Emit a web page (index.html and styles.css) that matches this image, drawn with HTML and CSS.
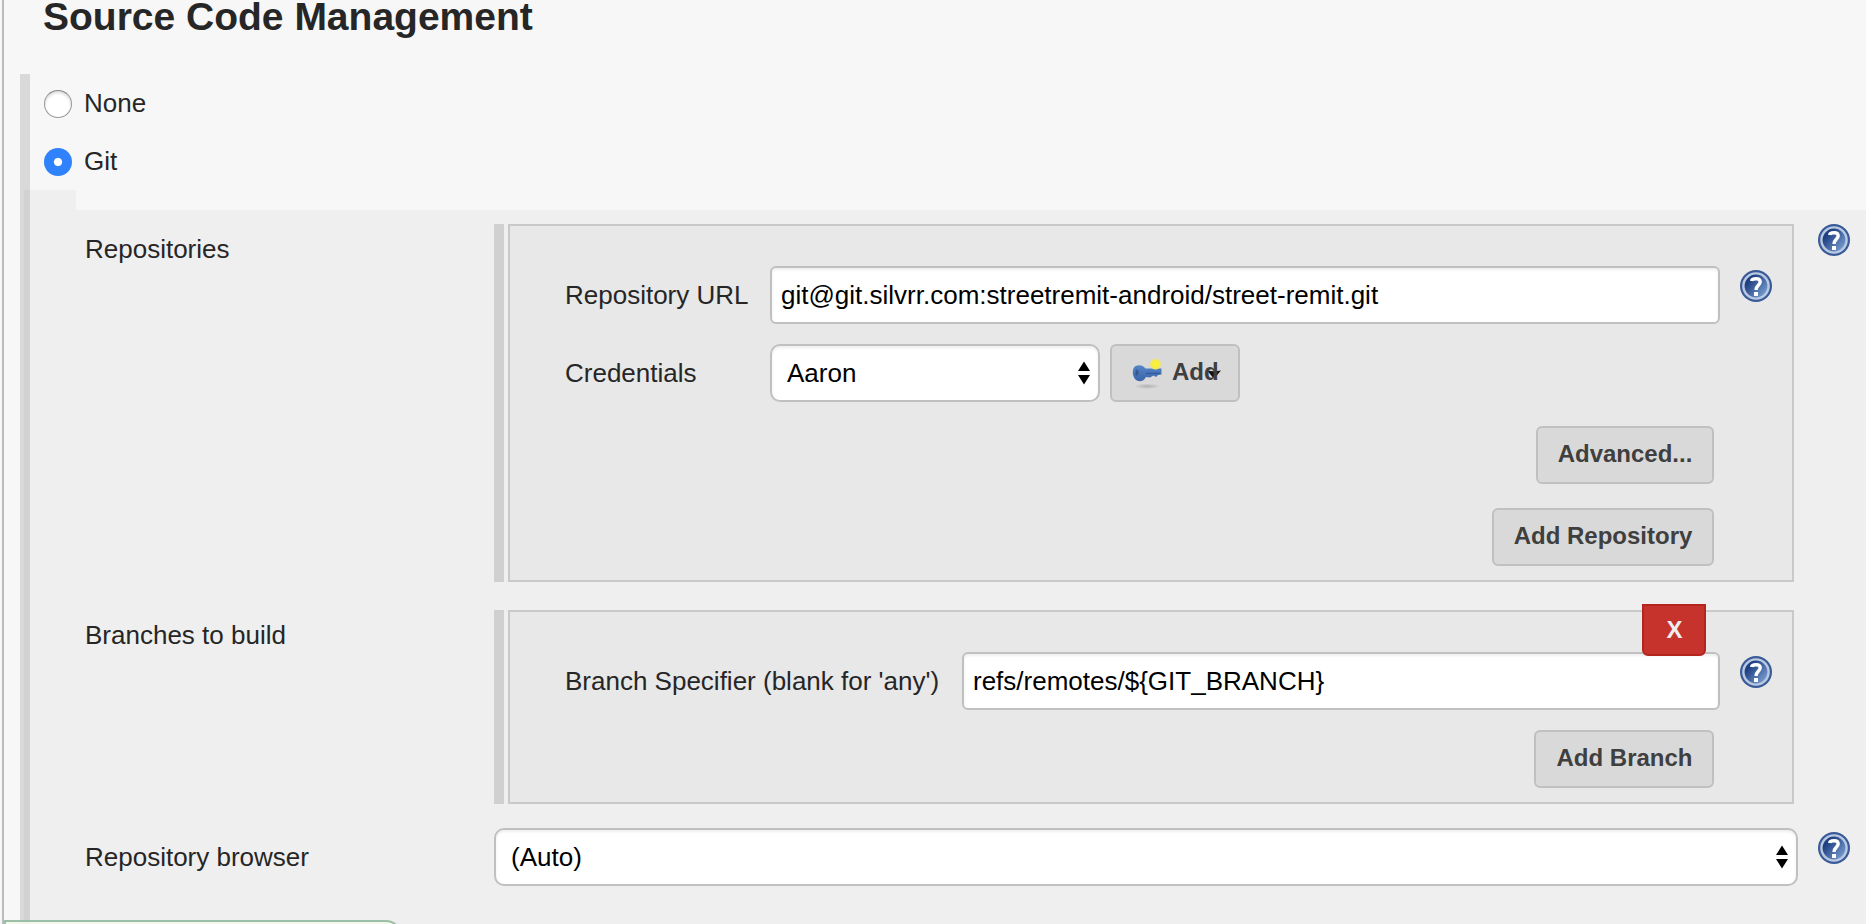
FILE: index.html
```html
<!DOCTYPE html>
<html lang="en">
<head>
<meta charset="utf-8">
<title>Source Code Management</title>
<link rel="stylesheet" href="styles.css">
</head>
<body>
<svg class="defs" width="0" height="0" aria-hidden="true">
  <defs>
    <linearGradient id="disc" x1="0.1" y1="0.2" x2="0.9" y2="0.9">
      <stop offset="0.15" stop-color="#1f3f82"/>
      <stop offset="1" stop-color="#7ea3d4"/>
    </linearGradient>
    <symbol id="help" viewBox="0 0 32 32">
      <circle cx="16" cy="16" r="16" fill="#3a5b97"/>
      <circle cx="16" cy="16" r="12.6" fill="url(#disc)" stroke="#b9c9e2" stroke-width="2.4"/>
      <path d="M11.6 11C12 8.2 20.2 7.6 20.2 11.8C20.2 15.2 16 15.4 16 20" fill="none" stroke="#fff" stroke-width="3.4"/>
      <rect x="14" y="22" width="4" height="4" fill="#fff"/>
    </symbol>
    <symbol id="updown" viewBox="0 0 12 24">
      <path d="M6 0.5L12 10H0ZM0 14H12L6 23.5Z" fill="#000"/>
    </symbol>
  </defs>
</svg>
<main class="page">
  <h1 class="heading">Source Code Management</h1>
  <section class="scm">
    <label class="choice"><span class="radio"></span><span class="choice-text">None</span></label>
    <label class="choice"><span class="radio radio-on"></span><span class="choice-text">Git</span></label>
    <div class="notch"></div>
    <div class="git">
      <div class="row row-repos">
        <div class="label">Repositories</div>
        <div class="handle"></div>
        <div class="panel">
          <div class="field">
            <span class="field-label url-label">Repository URL</span>
            <input class="input" type="text" value="git@git.silvrr.com:streetremit-android/street-remit.git">
            <svg class="help"><use href="#help"/></svg>
          </div>
          <div class="field credentials">
            <span class="field-label url-label">Credentials</span>
            <div class="select select-small"><span>Aaron</span><svg class="arrows"><use href="#updown"/></svg></div>
            <button class="button add">
              <svg class="key" viewBox="0 0 32 32">
                <defs>
                  <radialGradient id="glow"><stop offset="0.4" stop-color="#f8f03c"/><stop offset="0.75" stop-color="#f3ec50"/><stop offset="1" stop-color="#f3ec50" stop-opacity="0"/></radialGradient>
                  <radialGradient id="shade"><stop offset="0" stop-color="#b0b0b0"/><stop offset="1" stop-color="#b0b0b0" stop-opacity="0"/></radialGradient>
                  <linearGradient id="steel" x1="0" y1="0" x2="0" y2="1"><stop offset="0" stop-color="#5585c6"/><stop offset="1" stop-color="#3a64a8"/></linearGradient>
                </defs>
                <ellipse cx="15" cy="28.3" rx="13" ry="2.8" fill="url(#shade)"/>
                <path d="M2 9.5C4.5 6 11 6.5 13.5 10.5H29.5V16.5L26 17L24 19L21.5 17.5L18 19.5L14 19C12 23.5 6.5 24.5 3.5 21.5C0.5 18.5 0 12.5 2 9.5Z" fill="url(#steel)"/>
                <path d="M4 11.5Q7.5 12 6.5 15.5Q5.5 18.5 3.2 17Z" fill="#34588f"/>
                <path d="M14 15.3H28" stroke="#2f5797" stroke-width="1"/>
                <circle cx="23.5" cy="6.2" r="6" fill="url(#glow)"/>
              </svg>
              <svg class="caret" viewBox="0 0 14 8"><path d="M0 0.5Q7 2 14 0.5L8.5 7Q7 8 5.5 7Z" fill="#151515"/></svg>
              <span class="add-text">Add</span>
            </button>
          </div>
          <div class="actions advanced"><button class="button">Advanced...</button></div>
          <div class="actions add-repo"><button class="button">Add Repository</button></div>
        </div>
        <svg class="help"><use href="#help"/></svg>
      </div>
      <div class="row row-branches">
        <div class="label">Branches to build</div>
        <div class="handle"></div>
        <div class="panel">
          <button class="delete">X</button>
          <div class="field">
            <span class="field-label branch-label">Branch Specifier (blank for 'any')</span>
            <input class="input" type="text" value="refs/remotes/${GIT_BRANCH}">
            <svg class="help"><use href="#help"/></svg>
          </div>
          <div class="actions add-branch"><button class="button">Add Branch</button></div>
        </div>
      </div>
      <div class="row row-browser">
        <div class="label">Repository browser</div>
        <div class="select select-wide"><span>(Auto)</span><svg class="arrows"><use href="#updown"/></svg></div>
        <svg class="help"><use href="#help"/></svg>
      </div>
    </div>
  </section>
  <div class="status"></div>
</main>
</body>
</html>
```
FILE: styles.css
```css
* { box-sizing: border-box; }

body {
  margin: 0;
  background: #f7f7f7;
  color: #262626;
  font: 26px/30px "Liberation Sans", Arial, sans-serif;
  overflow: hidden;
}

.defs { position: absolute; }

.page {
  position: relative;
  height: 924px;
  margin-left: 2px;
  border-left: 2px solid #bbb;
  overflow: hidden;
}

.heading {
  margin: 0;
  padding-left: 39px;
  height: 74px;
  font-size: 39px;
  line-height: 33px;
  font-weight: bold;
  white-space: nowrap;
}

.scm {
  margin-left: 16px;
  border-left: 10px solid #d9d9d9;
  height: 850px;
}

.choice {
  display: flex;
  align-items: center;
  gap: 12px;
  height: 58px;
  padding: 2px 0 0 14px;
}

.choice-text { padding-bottom: 2px; }

.radio {
  width: 28px;
  height: 28px;
  border: 1px solid #999;
  border-top-color: #858585;
  border-radius: 50%;
  background: #fff;
  box-shadow: inset 0 2px 3px rgba(0, 0, 0, 0.15);
}

.radio-on {
  border: 0;
  background: radial-gradient(circle, #fff 3.6px, #2f82fb 4.6px);
  box-shadow: none;
}

.notch {
  width: 52px;
  height: 20px;
  margin-left: -6px;
  background: rgba(0, 0, 0, 0.033);
}

.git {
  height: 714px;
  margin-left: -6px;
  padding: 14px 0 0 61px;
  background: rgba(0, 0, 0, 0.033);
}

.row {
  display: flex;
  align-items: flex-start;
}

.row-repos { height: 386px; }
.row-branches { height: 218px; }

.label {
  width: 409px;
  padding-top: 10px;
}

.row-browser .label { padding-top: 14px; }

.handle {
  align-self: stretch;
  width: 10px;
  margin-right: 4px;
  background: #d0d0d0;
}

.row-repos .handle { height: 358px; }
.row-branches .handle { height: 194px; }

.panel {
  position: relative;
  width: 1286px;
  height: 358px;
  padding: 40px 20px 0 55px;
  border: 2px solid #c9c9c9;
  background: #e8e8e8;
}

.row-branches .panel { height: 194px; }

.help {
  flex: none;
  width: 32px;
  height: 32px;
}

.row > .help { margin-left: 24px; }
.row-browser > .help { margin: 4px 0 0 20px; }

.field {
  display: flex;
  align-items: flex-start;
}

.field-label {
  flex: none;
  line-height: 58px;
  white-space: nowrap;
}

.url-label { width: 205px; }
.branch-label { width: 397px; }

.input {
  flex: 1;
  min-width: 0;
  height: 58px;
  margin: 0 20px 0 0;
  padding: 0 9px;
  border: 2px solid #c0c0c0;
  border-radius: 6px;
  background: #fff;
  box-shadow: inset 0 2px 3px rgba(0, 0, 0, 0.07);
  color: #000;
  font: inherit;
}

.field .help { margin-top: 4px; }

.credentials { margin-top: 20px; }

.select {
  display: flex;
  align-items: center;
  justify-content: space-between;
  height: 58px;
  padding: 0 8px 0 15px;
  border: 2px solid #c0c0c0;
  border-radius: 10px;
  background: #fff;
  box-shadow: inset 0 2px 3px rgba(0, 0, 0, 0.07);
  color: #000;
}

.select-small { width: 330px; margin-right: 10px; }
.select-wide { width: 1304px; }

.arrows {
  width: 12px;
  height: 24px;
}

.button {
  height: 58px;
  margin: 0;
  padding: 0 16px 3px;
  border: 2px solid #c0c0c0;
  border-radius: 6px;
  background: #d9d9d9;
  color: #3f3f3f;
  font: bold 24px/30px "Liberation Sans", Arial, sans-serif;
  white-space: nowrap;
}

.add {
  position: relative;
  display: flex;
  align-items: center;
  width: 130px;
  padding: 0 0 3px 20px;
}

.add-text { position: relative; }

.key {
  width: 32px;
  height: 32px;
  margin: 4px 8px 0 0;
}

.caret {
  position: absolute;
  left: 95px;
  top: 24px;
  width: 14px;
  height: 8px;
}

.actions {
  display: flex;
  justify-content: flex-end;
  padding-right: 58px;
}

.advanced { margin-top: 24px; }
.advanced .button { width: 178px; padding: 0 0 3px; }
.add-repo { margin-top: 24px; }
.add-repo .button { width: 222px; padding: 0 0 3px; }
.add-branch { margin-top: 20px; }
.add-branch .button { width: 180px; padding: 0 0 3px 1px; }

.delete {
  position: absolute;
  right: 86px;
  top: -8px;
  width: 64px;
  height: 52px;
  padding: 0 0 1px 1px;
  border: 2px solid #b3251e;
  border-radius: 0 0 6px 6px;
  background: #c6322c;
  color: #eee;
  font: bold 24px/30px "Liberation Sans", Arial, sans-serif;
}

.status {
  position: absolute;
  left: 0;
  top: 920px;
  width: 398px;
  height: 40px;
  border: 2px solid #9bbfa8;
  border-radius: 0 16px 0 0;
  background: rgba(243, 248, 231, 0.95);
}
```
